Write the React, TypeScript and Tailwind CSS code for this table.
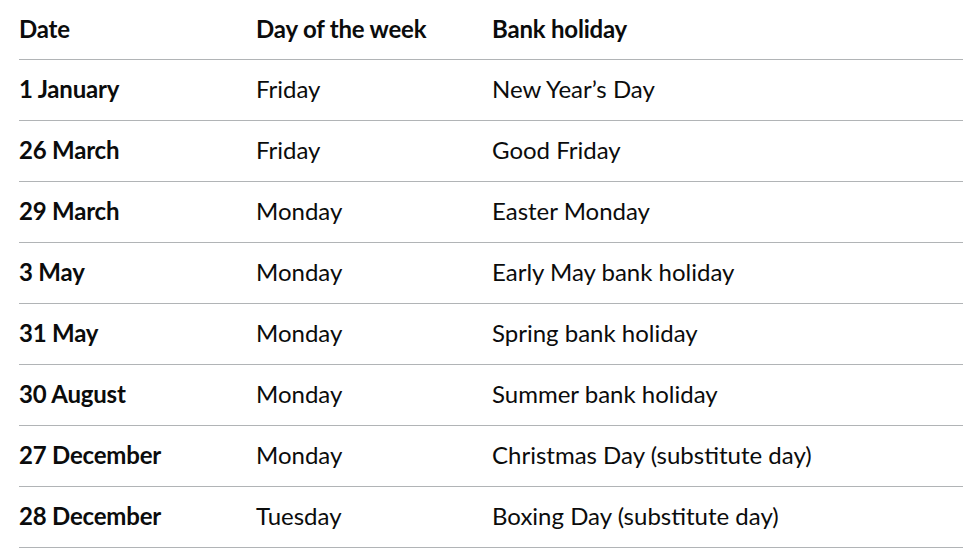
const rows = [
  ['1 January', 'Friday', 'New Year’s Day'],
  ['26 March', 'Friday', 'Good Friday'],
  ['29 March', 'Monday', 'Easter Monday'],
  ['3 May', 'Monday', 'Early May bank holiday'],
  ['31 May', 'Monday', 'Spring bank holiday'],
  ['30 August', 'Monday', 'Summer bank holiday'],
  ['27 December', 'Monday', 'Christmas Day (substitute day)'],
  ['28 December', 'Tuesday', 'Boxing Day (substitute day)'],
];

export default function App() {
  return (
    <div className="min-h-screen bg-white px-[19px] pt-px text-[#0b0c0c]" style={{ fontFamily: 'Lato, "Noto Sans", sans-serif' }}>
      <table className="w-[944px] border-collapse text-left text-[24px] leading-[33px]">
        <thead>
          <tr className="border-b border-[#b1b4b6]">
            <th className="w-[237px] pt-[11px] pb-[14px] font-bold tracking-[-0.2px]">Date</th>
            <th className="w-[236px] pt-[11px] pb-[14px] font-bold tracking-[-0.2px]">Day of the week</th>
            <th className="pt-[11px] pb-[14px] font-bold tracking-[-0.2px]">Bank holiday</th>
          </tr>
        </thead>
        <tbody>
          {rows.map((r) => (
            <tr key={r[0]} className="border-b border-[#b1b4b6]">
              <th className="pt-[12px] pb-[15px] font-bold tracking-[-0.2px]">{r[0]}</th>
              <td className="pt-[12px] pb-[15px]">{r[1]}</td>
              <td className="pt-[12px] pb-[15px]">{r[2]}</td>
            </tr>
          ))}
        </tbody>
      </table>
    </div>
  );
}
